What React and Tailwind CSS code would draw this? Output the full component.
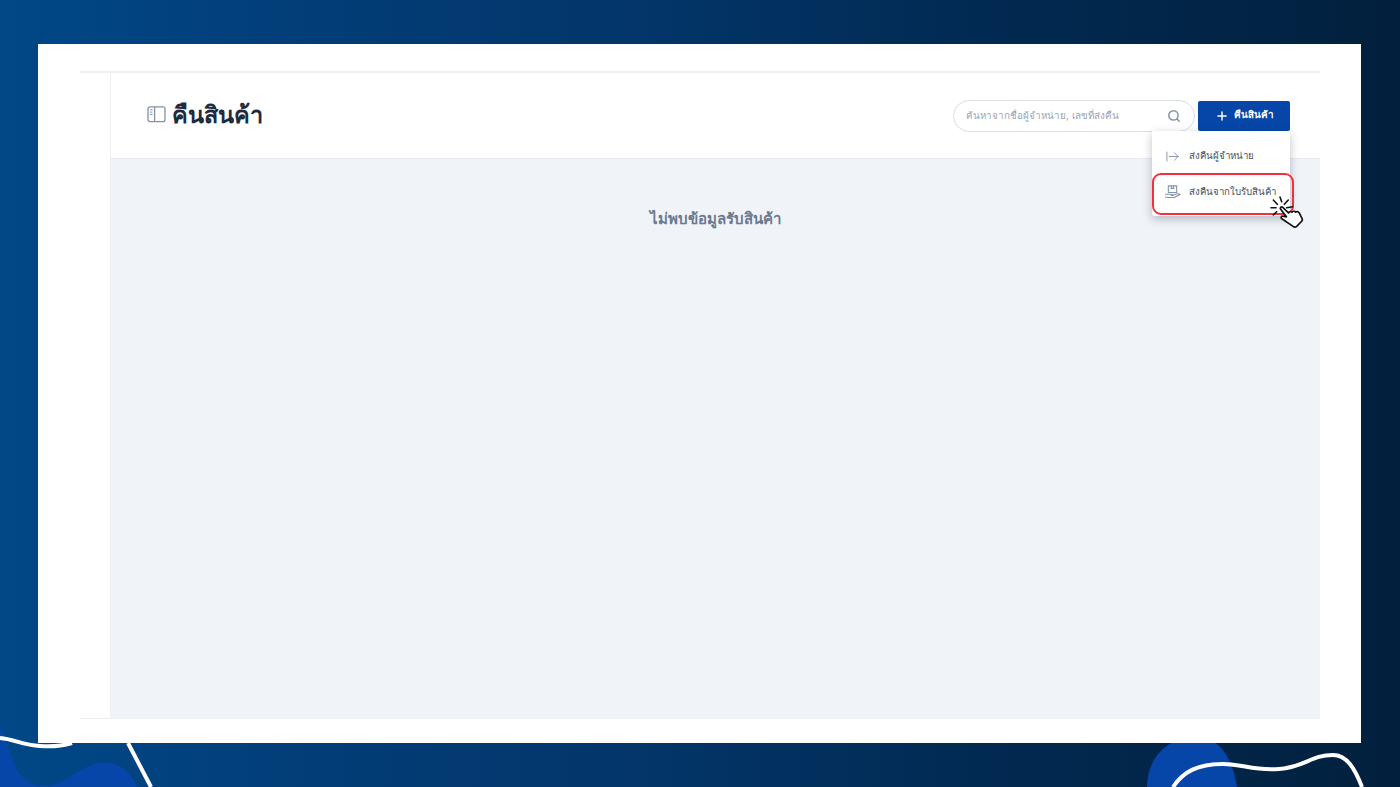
import React from 'react'
import { ArrowRightFromLine, Plus, Search } from 'lucide-react'

const menuItems = ['ส่งคืนผู้จำหน่าย', 'ส่งคืนจากใบรับสินค้า']

function BookIcon() {
  return (
    <svg viewBox="0 0 20 18" className="w-[19px] h-[17px] text-[#8592a8]" fill="none" stroke="currentColor" strokeWidth="1.4">
      <rect x="1" y="1" width="18" height="15.5" rx="2" />
      <path d="M8 1v15.5" />
      <path d="M3.2 4h2.6M3.2 6.5h2.6M3.2 9h2.6" strokeWidth="1" />
    </svg>
  )
}

function BoxHandIcon() {
  return (
    <svg viewBox="0 0 20 18" className="w-[17px] h-[15px] text-[#8592a8]" fill="none" stroke="currentColor" strokeWidth="1.3">
      <path d="M5 1h10v8H5z" />
      <path d="M8.500 1v3h3V1" />
      <path d="M1 11h6.500c2 0 2.500.8 3 1.500H8M10.500 12l5.500-1.500c1.500-.3 3 .5 3 1l-7 3.500H5l-4-.5" />
    </svg>
  )
}

function ClickCursor() {
  return (
    <svg viewBox="0 0 34 36" className="absolute left-[1270px] top-[194px] w-[34px] h-[36px]">
      <g stroke="#111" strokeWidth="1.6" strokeLinecap="round">
        <path d="M10 3l1.700 4.700M3.300 6l4 4.300M1 13.700h5M3.300 21l3.400-3.300M18.300 6l-4 4.300M22.700 12.700l-6 1" />
      </g>
      <path
        d="M10.500 15c-.6-1.500 1-2.800 2.300-1.700l5.700 5.600c.9-1.200 2.400-1.500 3.500-.8 1-1.200 2.700-1 3.700 0 1.300-.7 2.800-.3 3.500.8l2.800 5.500c.6 1.200.3 2.400-.6 3.100l-4.700 4.800c-1.100.9-2.500 1-3.600.1l-11.200-7.600c-1.400-1-.6-3 1.200-2.600l3.300.6z"
        fill="#fff"
        stroke="#111"
        strokeWidth="1.700"
        strokeLinejoin="round"
      />
    </svg>
  )
}

export default function App() {
  return (
    <div className="relative w-[1400px] h-[787px] overflow-hidden bg-[linear-gradient(90deg,#004887_0%,#023e79_20%,#03366a_45%,#012a52_70%,#02203d_100%)] font-['Inter','Noto_Sans','Noto_Sans_CJK_SC',sans-serif]">
      {/* corner decorations */}
      <svg viewBox="0 0 1400 787" className="absolute inset-0 w-[1400px] h-[787px]" fill="none">
        <path d="M0 727c8 14 12 37 20 47 10 12 22 13 32 11 16-4 28-18 46-22 20-3 33 8 39 24H0z" fill="#0546a8" />
        <path d="M1147 787c0-25 16-50 50-50 24 0 36 24 40 50z" fill="#0546a8" />
        <path d="M0 738c14 1 22 7 40 8 12 1 22 0 32-3" stroke="#fff" strokeWidth="4" />
        <path d="M128 743l23 44" stroke="#fff" strokeWidth="4" />
        <path d="M1173 787c10-15 24-23 50-23 20 0 30 7 56 5 26-2 32-14 54-14 14 0 22 14 29 32" stroke="#fff" strokeWidth="4" />
      </svg>

      <div className="relative pt-[44px] pb-[44px] pl-[38px] pr-[39px] h-full">
        <div className="h-full bg-white pt-[27px] pb-[24px] pl-[42px] pr-[41px]">
          <div className="flex h-full border-t-2 border-b border-[#eef0f4]">
            <div className="w-[31px] border-r border-[#edf0f5] shrink-0" />
            <div className="flex-1 flex flex-col min-w-0">
              <div className="h-[86px] shrink-0 flex items-center justify-between pl-[36px] pr-[30px] border-b border-[#e8ebf1]">
                <div className="flex items-center gap-[6px] -translate-y-px">
                  <BookIcon />
                  <h1 className="text-[23.500px] font-bold leading-none text-[#1e2a3d]">คืนสินค้า</h1>
                </div>
                <div className="flex items-center gap-[3px]">
                  <div className="w-[242px] h-[32px] rounded-full border border-[#d8deea] flex items-center justify-between pl-[12px] pr-[13px]">
                    <span className="text-[9.800px] text-[#99a3b5] translate-y-px">ค้นหาจากชื่อผู้จำหน่าย, เลขที่ส่งคืน</span>
                    <Search className="w-[14px] h-[14px] text-[#8592a8]" strokeWidth={2.500} />
                  </div>
                  <button className="w-[92px] h-[30px] bg-[#0546a8] rounded-[2px] flex items-center justify-center gap-[5px] text-white text-[9.800px] font-semibold">
                    <Plus className="w-[14px] h-[14px]" strokeWidth={2.500} />
                    คืนสินค้า
                  </button>
                </div>
              </div>
              <div className="flex-1 bg-[#f0f3f8] pt-[50px] flex justify-center">
                <p className="text-[15px] font-bold text-[#6b7a90] leading-5">ไม่พบข้อมูลรับสินค้า</p>
              </div>
            </div>
          </div>
        </div>
      </div>

      {/* open dropdown */}
      <div className="absolute left-[1152px] top-[131px] w-[138px] h-[85px] pt-[7px] bg-white rounded-b-[3px] shadow-[0_3px_10px_rgba(40,50,70,0.3)] flex flex-col">
        {menuItems.map((label, i) => (
          <div key={label} className="h-[36px] flex items-center gap-[8px] pl-[12px] text-[9.700px] text-[#454f5f]">
            {i === 0 ? <ArrowRightFromLine className="w-[17px] h-[15px] text-[#8592a8]" strokeWidth={1.500} /> : <BoxHandIcon />}
            <span>{label}</span>
          </div>
        ))}
      </div>
      <div className="absolute left-[1152px] top-[173px] w-[142px] h-[42px] rounded-[9px] border-[2.500px] border-[#f5303c]" />
      <ClickCursor />
    </div>
  )
}
